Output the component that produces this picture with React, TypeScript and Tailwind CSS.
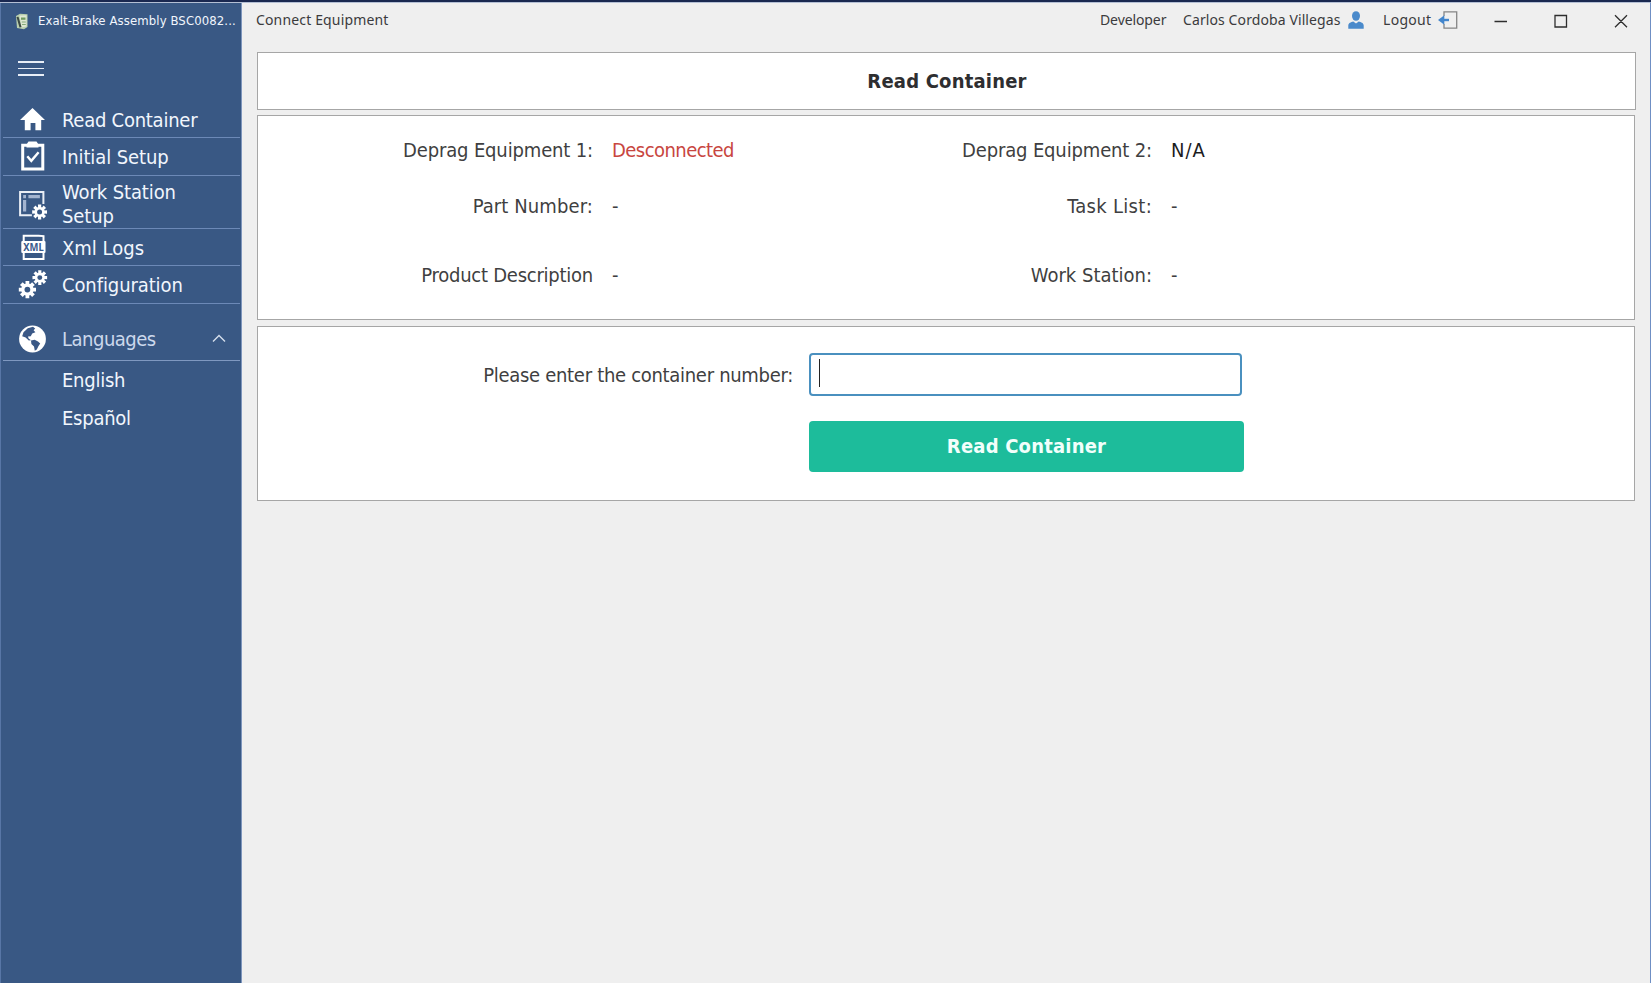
import type { ReactNode } from "react";

function gearPath(cx: number, cy: number, r: number, inner: number) {
  const pts: string[] = [];
  for (let i = 0; i < 8; i++) {
    const a = (i * Math.PI) / 4;
    const steps: [number, number][] = [[-0.3, inner], [-0.22, r], [0.22, r], [0.3, inner]];
    for (const [d, rad] of steps) {
      pts.push(`${(cx + rad * Math.cos(a + d)).toFixed(2)} ${(cy + rad * Math.sin(a + d)).toFixed(2)}`);
    }
  }
  const h = r * 0.33;
  return `M${pts.join("L")}ZM${cx - h} ${cy}a${h} ${h} 0 1 0 ${2 * h} 0a${h} ${h} 0 1 0 ${-2 * h} 0Z`;
}

function HomeIcon() {
  return (
    <svg width="28" height="28" viewBox="1 0 28 28" fill="#fff">
      <path d="M15.5 3 28 15H24.2V25.3H18.4V18H13.6V25.3H7.8V15H3Z" />
    </svg>
  );
}

function ClipboardIcon() {
  return (
    <svg width="28" height="30" viewBox="1 0 28 30" fill="none" stroke="#fff">
      <path d="M5.7 4.2H25.8V28H5.7Z" strokeWidth="3" />
      <path d="M9.5 6.5V3.5L11.5 .5H19.5L21.5 3.5V6.5Z" fill="#fff" stroke="none" />
      <path d="m10.3 15.2 4 4.6 7.3-8.6" strokeWidth="2.4" />
    </svg>
  );
}

function StationIcon() {
  return (
    <svg className="mt-[4px]" width="30" height="30" viewBox="0.6 0 30 30" fill="none">
      <path d="M14.5 25.2H2.7V2H26V14" stroke="#e9eef6" strokeWidth="2" />
      <path d="M5.8 6.6H8.6M11 6.6H22.5M7.2 10V21.5" stroke="#a3b4d0" strokeWidth="3.2" />
      <path d={gearPath(22.2, 22, 7.6, 5.2)} fill="#fff" fillRule="evenodd" />
    </svg>
  );
}

function XmlIcon() {
  return (
    <svg width="29" height="28" viewBox="0.5 -0.5 29 28" fill="none">
      <path d="M6.2 8V2.2H21L26 2.6V8M6.2 19V25.5H26V19" stroke="#fff" strokeWidth="2" />
      <rect x="3.8" y="7.4" width="24.2" height="12" rx="1" fill="#fff" />
      <text x="16" y="17.1" textAnchor="middle" fontSize="10" fontWeight="700" fill="#3a5a8c" textLength="20.5" lengthAdjust="spacingAndGlyphs" fontFamily="Noto Sans, sans-serif">XML</text>
    </svg>
  );
}

function GearsIcon() {
  return (
    <svg width="30" height="30" viewBox="0.6 0 30 30" fill="#fff" fillRule="evenodd">
      <path d={gearPath(10, 20.6, 8.8, 6.2)} />
      <path d={gearPath(22.4, 8.6, 7.5, 5.1)} />
    </svg>
  );
}

function GlobeIcon() {
  return (
    <svg width="28" height="28" viewBox="0 0 28 28">
      <circle cx="14.5" cy="14" r="13.4" fill="#fff" />
      <path d="M5.5 7.2 9.8 3.2 15 1.8 17.2 3.6 15.6 5.2 17.4 7.2 14.2 8.6 12.8 11.2 10 11.4 10.6 13.6 13 15.2 10.8 15.4 7.6 12.6 4.2 11.2Z" fill="#3a5886" />
      <path d="M13 15.6 16.6 14.8 20 16.4 22.2 18.4 20.4 21.2 18.8 24.4 16.8 25.8 16 21.6 13.4 19Z" fill="#3a5886" />
    </svg>
  );
}

function AppIcon() {
  return (
    <svg width="14" height="17" viewBox="0 0 14 17">
      <path d="M1 3 5 .8 12.5 1.2V14L9 16.2 2 15Z" fill="#b9cfae" />
      <path d="M4.5 2.6 11.5 2.2V13.6L6.5 14.5Z" fill="#dfe8d2" />
      <path d="M6 4.5H10.5V6.8H6Z" fill="#6f9a5f" />
      <path d="M6.8 9H10.8M7 11.5H10.8" stroke="#86ab78" />
      <path d="M1.5 4 3.5 3.8 6.5 14 4.5 14.4Z" fill="#3c4a45" />
    </svg>
  );
}

function NavItem({ icon, children, className }: { icon: ReactNode; children: ReactNode; className: string }) {
  return (
    <a className={`flex items-center border-b border-[#6c89b7] pl-[15px] ${className}`}>
      <span className="flex w-[44px] shrink-0">{icon}</span>
      <span className="pt-[2px]">{children}</span>
    </a>
  );
}

function Field({ label, value }: { label: ReactNode; value: ReactNode }) {
  return (
    <div className="flex text-[#3f3f41]">
      <div className="w-[335px] text-right">{label}</div>
      <div className="ml-[19px]">{value}</div>
    </div>
  );
}

export default function App() {
  return (
    <div className="flex h-[983px] w-[1651px] flex-col overflow-hidden border-t-2 border-[#1a2850] bg-[#efefef] font-['DejaVu_Sans_Condensed','DejaVu_Sans',sans-serif] text-[20px] leading-6 whitespace-nowrap">
      <div className="flex min-h-0 grow border-t border-r border-t-[#b4bfd4] border-r-[#6f8fc4]">
        <aside className="flex w-[242px] shrink-0 flex-col border-r border-l border-r-[#7e96bd] border-l-[#5876a6] bg-[#395884] text-[#f1f6fd]">
          <div className="flex h-9 items-center pl-[14px]">
            <AppIcon />
            <span className="ml-[9px] text-[13px] tracking-[0.1px]">Exalt-Brake Assembly BSC0082...</span>
          </div>
          <button className="mt-[22px] ml-[17px] flex w-[26px] flex-col gap-[5px]">
            <span className="h-[1.5px] w-full bg-[#e8eef7]" />
            <span className="h-[1.5px] w-full bg-[#e8eef7]" />
            <span className="h-[1.5px] w-full bg-[#e8eef7]" />
          </button>
          <nav className="mt-[25px] mr-[1px] ml-[2px] flex flex-col">
            <NavItem icon={<HomeIcon />} className="h-[37px] tracking-[-0.25px]">Read Container</NavItem>
            <NavItem icon={<ClipboardIcon />} className="h-[38px] tracking-[-0.1px]">Initial Setup</NavItem>
            <NavItem icon={<StationIcon />} className="h-[53px] pt-[2px] tracking-[-0.1px]">
              Work Station<br />Setup
            </NavItem>
            <NavItem icon={<XmlIcon />} className="h-[37px]">Xml Logs</NavItem>
            <NavItem icon={<GearsIcon />} className="h-[38px] tracking-[-0.1px]">Configuration</NavItem>
            <div className="mt-[14px] flex h-[43px] items-center border-b border-[#7f98c0] pl-[15px] tracking-[-0.5px] text-[#ccd8ec]">
              <span className="flex w-[44px]"><GlobeIcon /></span>
              Languages
              <svg className="ml-auto mr-[14px]" width="14" height="9" viewBox="0 0 14 9" fill="none" stroke="#d5deec" strokeWidth="1.4"><path d="m1 7.5 6-6 6 6" /></svg>
            </div>
            <a className="flex h-[38px] items-center pl-[59px] tracking-[-0.25px]">English</a>
            <a className="flex h-[38px] items-center pl-[59px] tracking-[-0.25px]">Español</a>
          </nav>
        </aside>
        <div className="flex grow flex-col">
          <header className="flex h-[49px] items-start pt-[6px] pl-[14px] font-['Noto_Sans',sans-serif] text-[14px] leading-[22px] text-[#3b3b3d]">
            <span className="tracking-[0.15px]">Connect Equipment</span>
            <div className="ml-auto flex">
              <span className="w-[83px] tracking-[-0.1px]">Developer</span>
              <span className="w-[165px] tracking-[0.1px]">Carlos Cordoba Villegas</span>
              <svg className="mt-[2px]" width="16" height="18" viewBox="0 0 16 18" fill="#4a8acb">
                <ellipse cx="8" cy="5" rx="4" ry="4.8" />
                <path d="M.3 17.8V14.5C.3 12 3 11 5.3 10.4L8 12.4 10.7 10.4C13 11 15.7 12 15.7 14.5V17.8Z" />
              </svg>
              <span className="ml-[19px] w-[55px] tracking-[0.3px]">Logout</span>
              <svg className="mt-[2px]" width="20" height="18" viewBox="0 0 20 18" fill="none">
                <path d="M6 5V.8H18.7V17.2H6V13" stroke="#858585" strokeWidth="1.3" />
                <path d="M11 9H3" stroke="#4285cc" strokeWidth="2.4" />
                <path d="M6.3 4.2V13.8L0 9Z" fill="#4285cc" />
              </svg>
              <svg className="mt-[4px] ml-[36px]" width="134" height="16" viewBox="0 0 134 16" fill="none" stroke="#2e2e2e" strokeWidth="1.3">
                <path d="M.5 8.5H13M61 2.5H72.5V14H61ZM121 2.3 133 14.3M133 2.3 121 14.3" />
              </svg>
              <span className="w-[22px]" />
            </div>
          </header>
          <main className="ml-[15px] flex flex-col">
            <section className="flex h-[58px] w-[1379px] items-center justify-center border border-[#a6a6a6] bg-white font-bold tracking-[0.2px] text-[#2e2e30]">
              <h1 className="ml-[1px]">Read Container</h1>
            </section>
            <section className="mt-[5px] grid h-[205px] w-[1378px] grid-cols-[559px_1fr] grid-rows-[56px_69px_24px] border border-[#a6a6a6] bg-white pt-[22px]">
              <Field label={<span className="tracking-[-0.15px]">Deprag Equipment 1:</span>} value={<span className="tracking-[-0.55px] text-[#c8463f]">Desconnected</span>} />
              <Field label={<span className="tracking-[-0.15px]">Deprag Equipment 2:</span>} value={<span className="tracking-[1px] text-[#1c1c1e]">N/A</span>} />
              <Field label={<span className="tracking-[0.1px]">Part Number:</span>} value="-" />
              <Field label={<span className="tracking-[0.3px]">Task List:</span>} value="-" />
              <Field label={<span className="tracking-[-0.25px]">Product Description</span>} value="-" />
              <Field label="Work Station:" value="-" />
            </section>
            <section className="mt-[6px] flex h-[175px] w-[1378px] flex-col border border-[#a6a6a6] bg-white pt-[26px]">
              <div className="flex items-center">
                <label className="w-[535px] text-right tracking-[-0.3px] text-[#3f3f41]">Please enter the container number:</label>
                <div className="ml-[16px] flex h-[43px] w-[433px] rounded-[4px] border-2 border-[#4a90bf] bg-white pt-[4px] pl-[8px]">
                  <span className="h-[28px] w-px bg-[#222]" />
                </div>
              </div>
              <button className="mt-[25px] ml-[551px] flex h-[51px] w-[435px] items-center justify-center rounded-[4px] bg-[#1dbc9b] pb-[2px] font-bold tracking-[0.2px] text-[#f2fffb]">Read Container</button>
            </section>
          </main>
        </div>
      </div>
    </div>
  );
}
